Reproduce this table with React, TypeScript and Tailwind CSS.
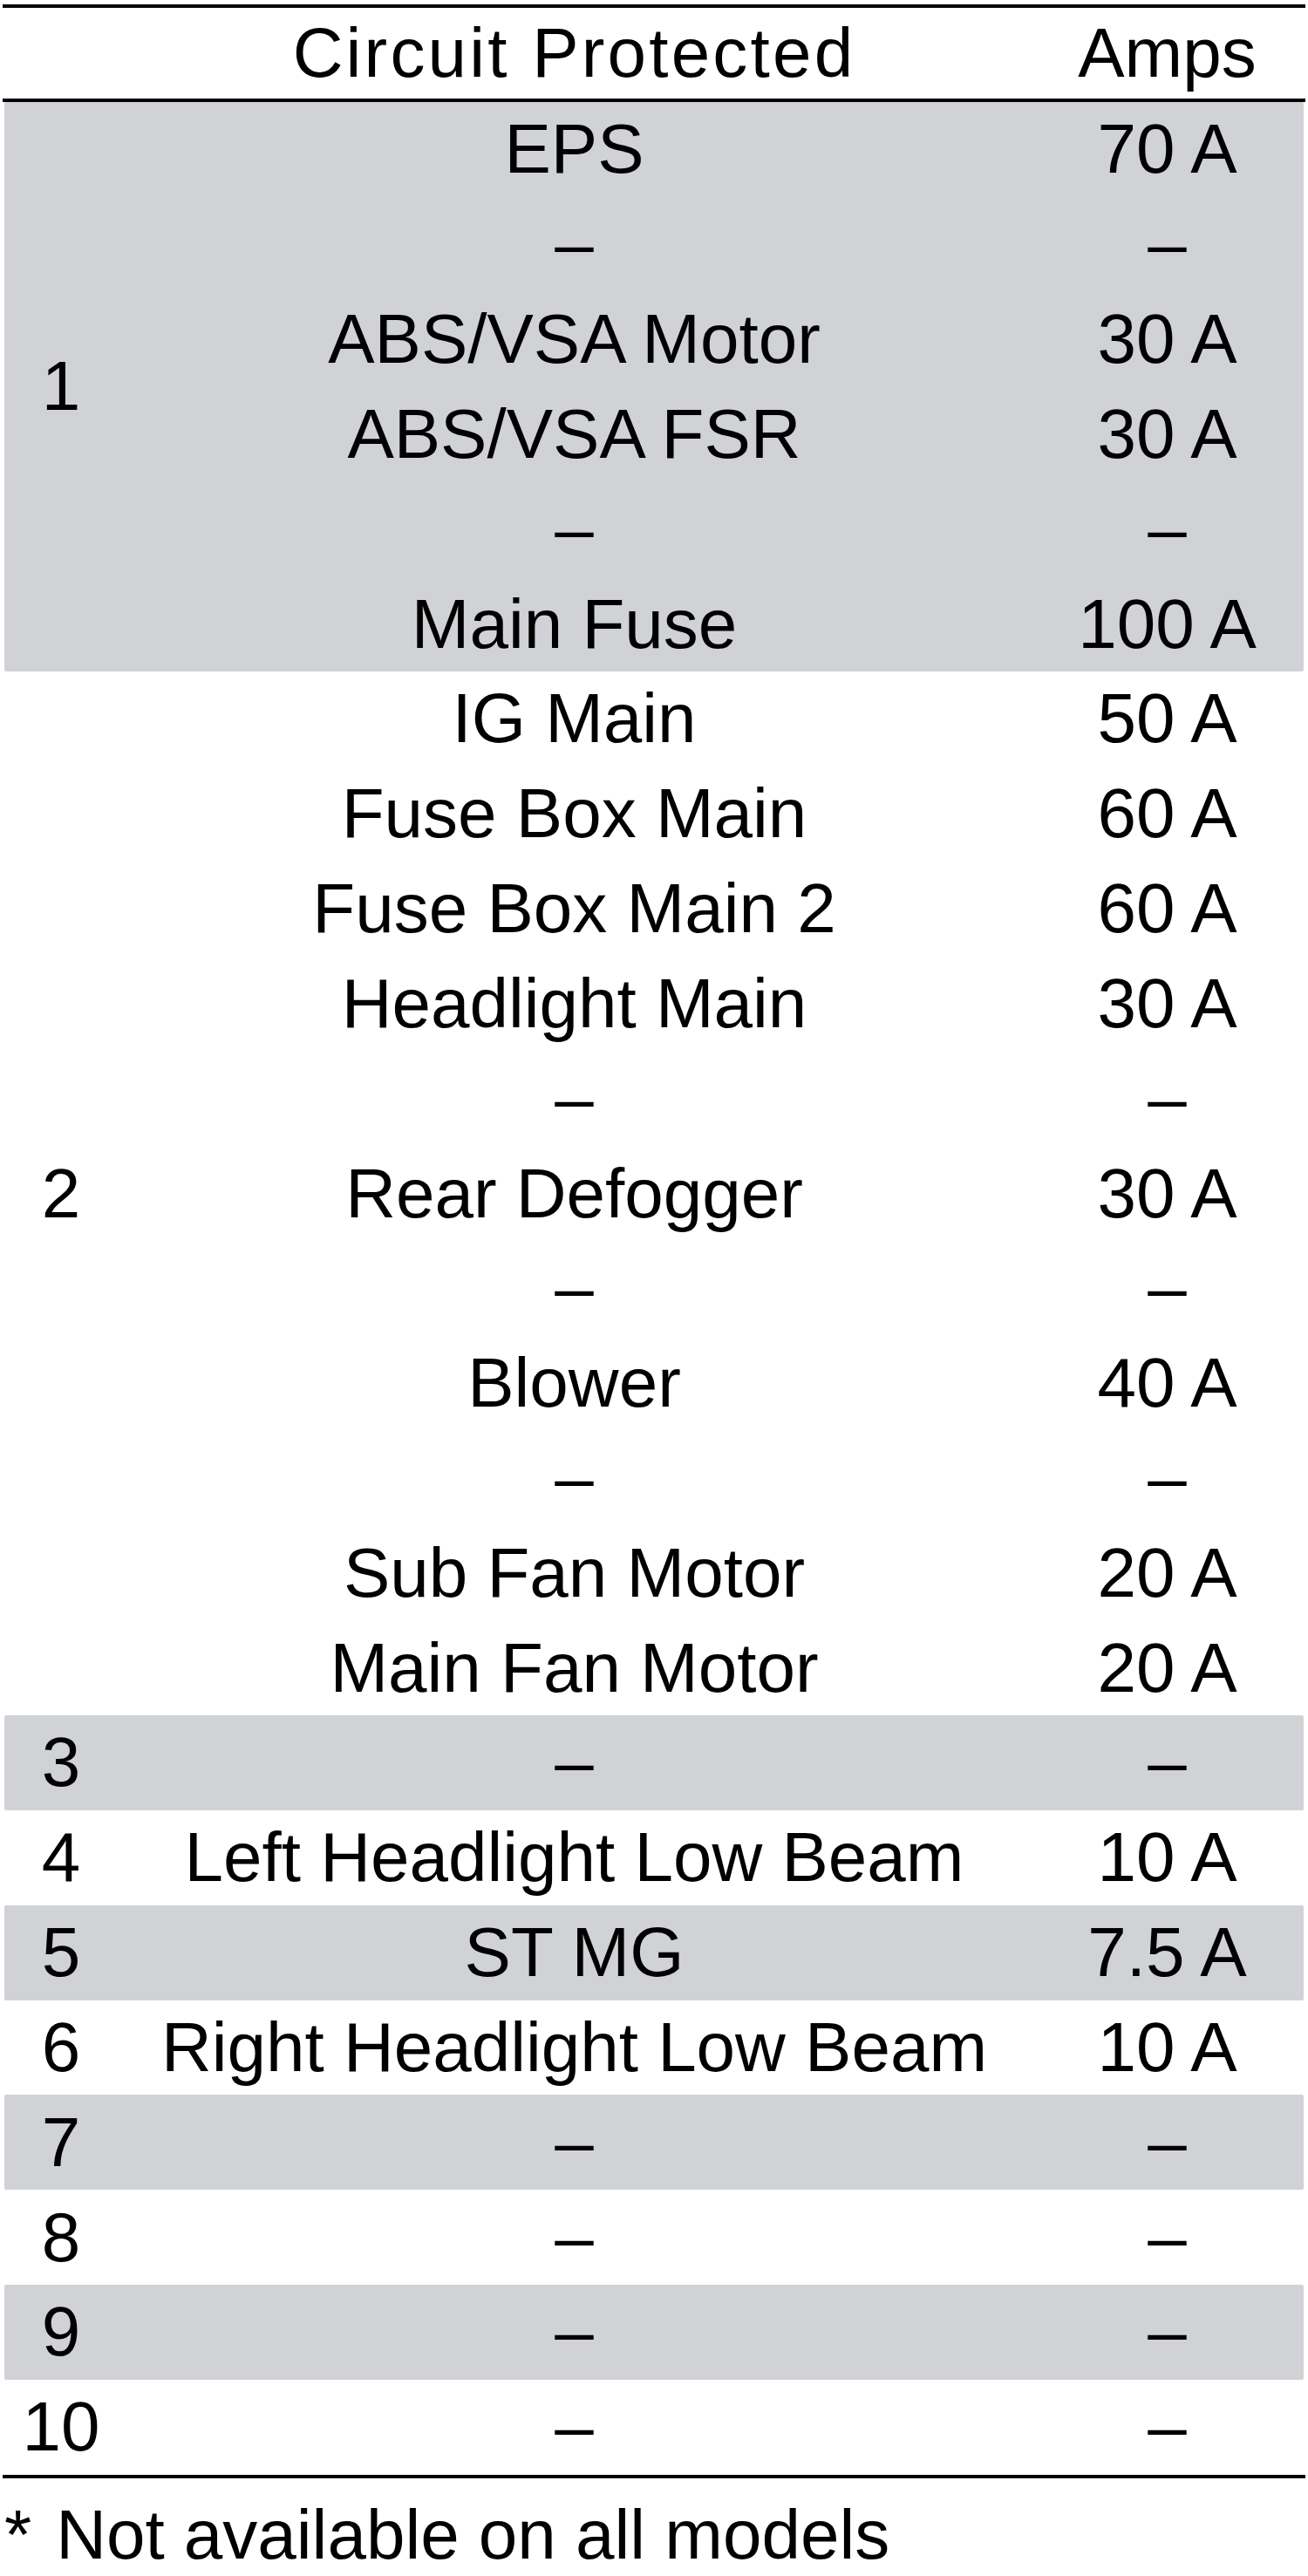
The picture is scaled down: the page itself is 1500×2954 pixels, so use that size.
import React from "react";

type Row = { c: string; a: string };

const D = "\u2013";

const groups: { n: string; gray: boolean; rows: Row[] }[] = [
  {
    n: "1",
    gray: true,
    rows: [
      { c: "EPS", a: "70 A" },
      { c: D, a: D },
      { c: "ABS/VSA Motor", a: "30 A" },
      { c: "ABS/VSA FSR", a: "30 A" },
      { c: D, a: D },
      { c: "Main Fuse", a: "100 A" },
    ],
  },
  {
    n: "2",
    gray: false,
    rows: [
      { c: "IG Main", a: "50 A" },
      { c: "Fuse Box Main", a: "60 A" },
      { c: "Fuse Box Main 2", a: "60 A" },
      { c: "Headlight Main", a: "30 A" },
      { c: D, a: D },
      { c: "Rear Defogger", a: "30 A" },
      { c: D, a: D },
      { c: "Blower", a: "40 A" },
      { c: D, a: D },
      { c: "Sub Fan Motor", a: "20 A" },
      { c: "Main Fan Motor", a: "20 A" },
    ],
  },
  { n: "3", gray: true, rows: [{ c: D, a: D }] },
  { n: "4", gray: false, rows: [{ c: "Left Headlight Low Beam", a: "10 A" }] },
  { n: "5", gray: true, rows: [{ c: "ST MG", a: "7.5 A" }] },
  { n: "6", gray: false, rows: [{ c: "Right Headlight Low Beam", a: "10 A" }] },
  { n: "7", gray: true, rows: [{ c: D, a: D }] },
  { n: "8", gray: false, rows: [{ c: D, a: D }] },
  { n: "9", gray: true, rows: [{ c: D, a: D }] },
  { n: "10", gray: false, rows: [{ c: D, a: D }] },
];

export default function App() {
  return (
    <div
      className="w-[1500px] h-[2954px] bg-white text-black px-[3px] pt-[5px] text-[80px] leading-none"
      style={{ fontFamily: '"Liberation Sans", Arial, sans-serif' }}
    >
      <div className="h-[4px] bg-black" />
      <div className="mx-[2px] h-[104px] flex items-center">
        <div className="w-[130px]" />
        <div className="w-[1047px] text-center tracking-[3.2px]">Circuit Protected</div>
        <div className="w-[313px] text-center">Amps</div>
      </div>
      <div className="h-[4px] bg-black" />
      <div className="flex flex-col">
        {groups.map((g) => (
          <div
            key={g.n}
            className={
              "mx-[2px] flex " + (g.gray ? "bg-[#d0d2d6] rounded-[2px]" : "bg-white")
            }
          >
            <div className="w-[130px] flex items-center justify-center">{g.n}</div>
            <div className="flex flex-col">
              {g.rows.map((r, i) => (
                <div key={i} className="h-[108.84px] flex items-center">
                  <div className="w-[1047px] text-center">{r.c}</div>
                  <div className="w-[313px] text-center">{r.a}</div>
                </div>
              ))}
            </div>
          </div>
        ))}
      </div>
      <div className="h-[4px] bg-black" />
      <div className="mt-[25px] flex items-start">
        <span className="ml-[2px]">*</span>
        <span className="ml-[28px]">Not available on all models</span>
      </div>
    </div>
  );
}
